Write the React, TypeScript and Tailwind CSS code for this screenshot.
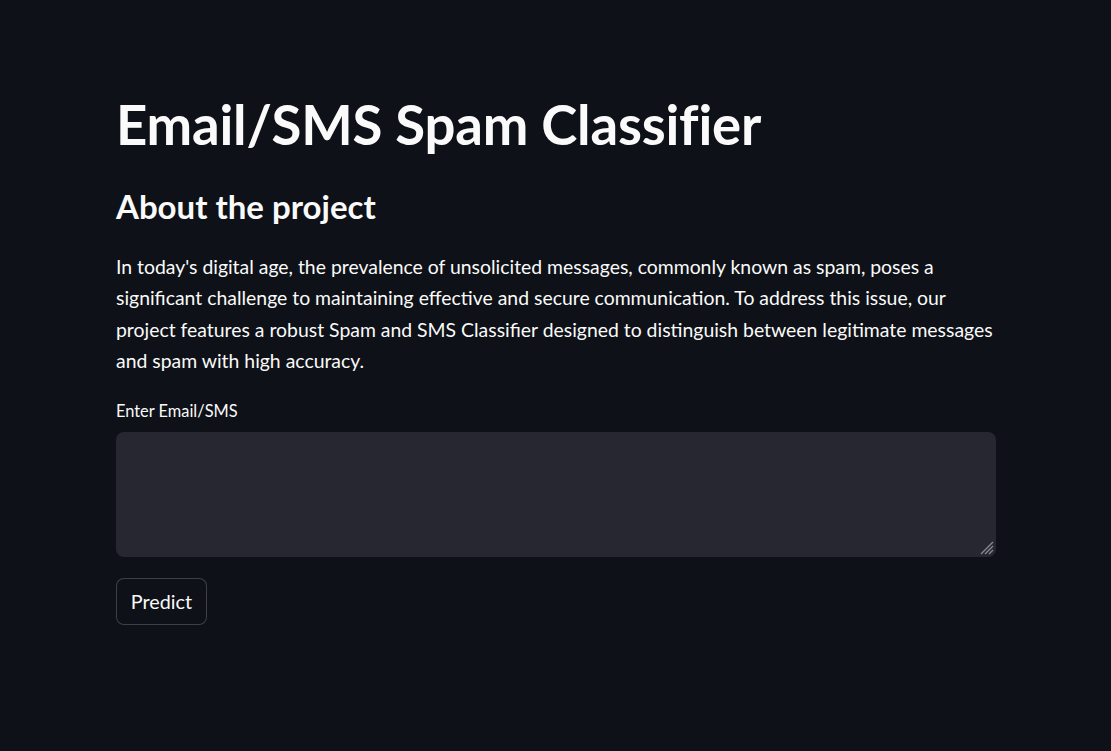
const lines = [
  "In today's digital age, the prevalence of unsolicited messages, commonly known as spam, poses a",
  "significant challenge to maintaining effective and secure communication. To address this issue, our",
  "project features a robust Spam and SMS Classifier designed to distinguish between legitimate messages",
  "and spam with high accuracy.",
];

export default function App() {
  return (
    <div
      className="min-h-[751px] w-full bg-[#0e1117] text-[#fafafa]"
      style={{ fontFamily: "Lato, 'Noto Sans', sans-serif" }}
    >
      <div className="ml-[116px] w-[880px] pt-[92px]">
        <h1 className="text-[54.5px] font-bold leading-[1.2] tracking-[-0.2px]">
          Email/SMS Spam Classifier
        </h1>
        <h2 className="mt-[30px] text-[33px] font-bold leading-[1.2]">About the project</h2>
        <p className="mt-[24px] text-[19.4px] leading-[31.5px]">
          {lines.map((l) => (
            <span key={l} className="block whitespace-nowrap">
              {l}
            </span>
          ))}
        </p>
        <label className="mt-[24px] block text-[16.4px] leading-[20px]">Enter Email/SMS</label>
        <div className="relative mt-[11px]">
          <textarea className="block h-[125px] w-full resize-none rounded-[8px] bg-[#262730] px-3 py-2 text-[18px] outline-none" />
          {/* resize grip */}
          <svg
            className="pointer-events-none absolute bottom-[2px] right-[2px]"
            width="16"
            height="16"
            viewBox="0 0 16 16"
          >
            <path d="M15 3 L3 15 M15 7 L7 15 M15 11 L11 15" stroke="#8a8b92" strokeWidth="1.3" />
          </svg>
        </div>
        <button className="mt-[21px] h-[47px] w-[91px] rounded-[8px] border border-[#fafafa]/20 bg-[#0e1117] text-[19.8px]">
          Predict
        </button>
      </div>
    </div>
  );
}
